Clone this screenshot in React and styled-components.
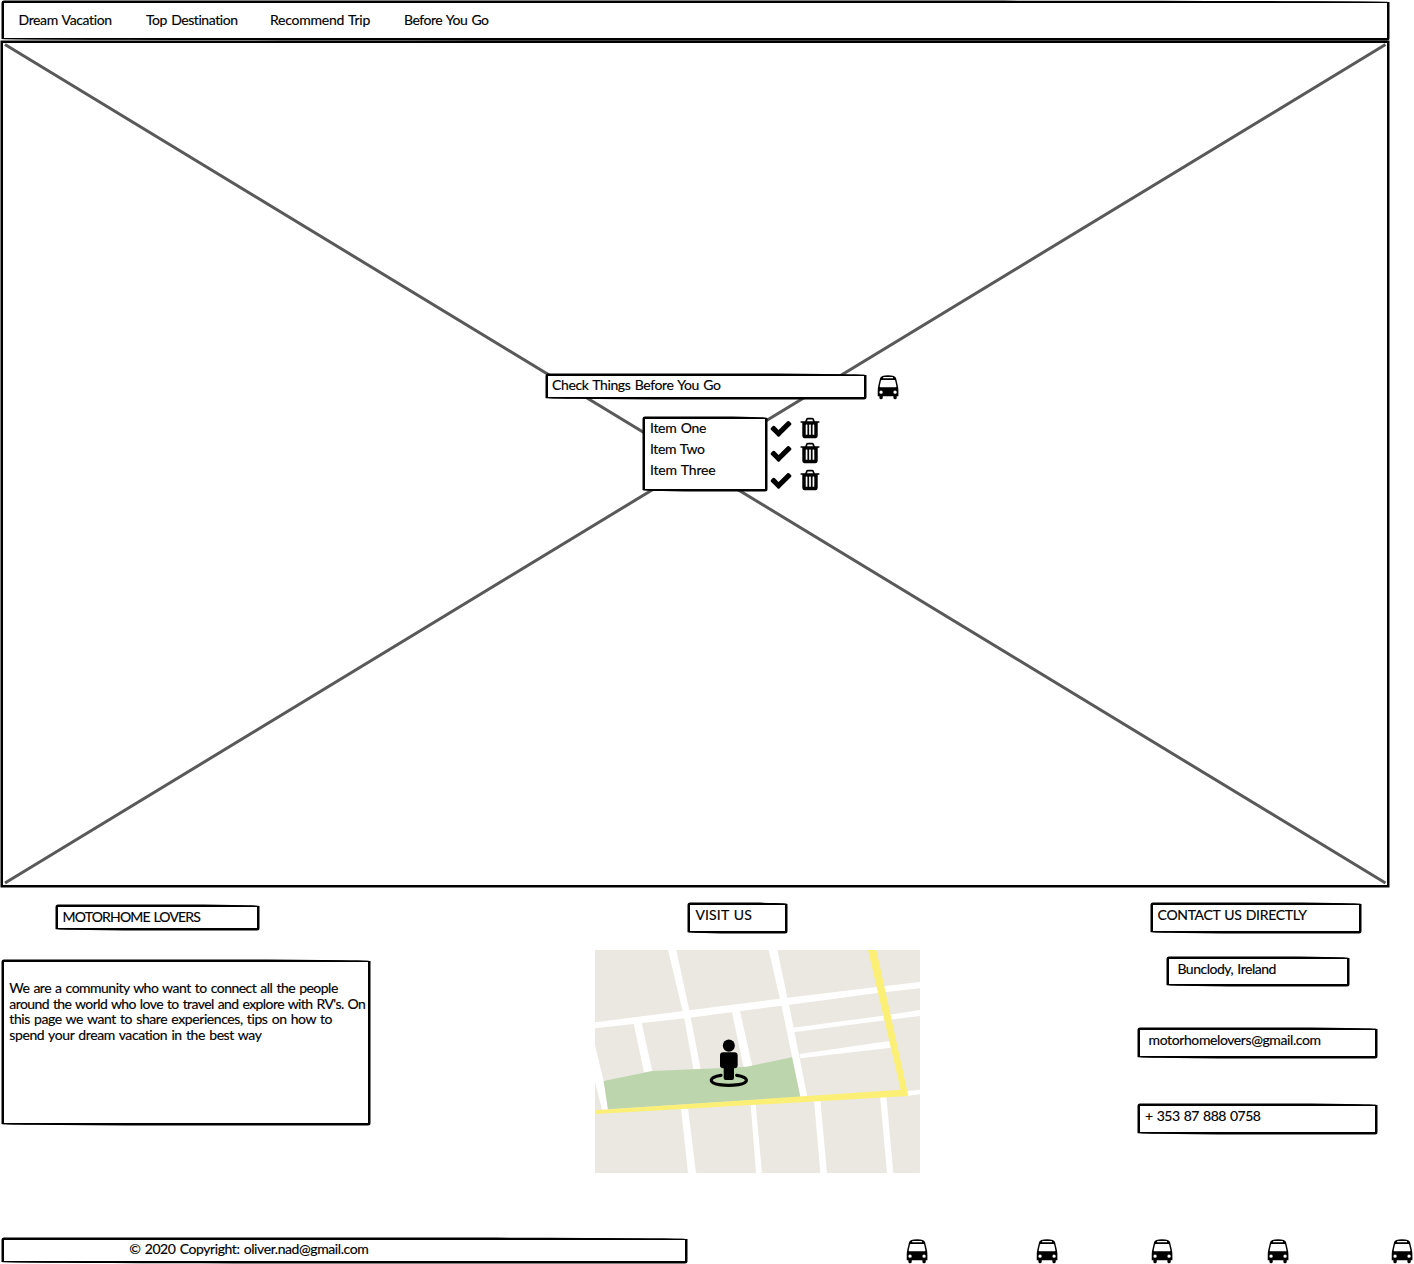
import React, { useLayoutEffect, useRef } from "react";
import styled, { createGlobalStyle, css } from "styled-components";

const GlobalStyle = createGlobalStyle`
  * { box-sizing: border-box; }
  body { margin: 0; background: #fff; overflow: hidden; }
`;

const Page = styled.div`
  width: 1414px;
  height: 1264px;
  overflow: hidden;
  display: flex;
  flex-direction: column;
  padding: 1px 0 1px 2px;
  background: #fff;
  color: #000;
  font: 14px/17px Lato, "Open Sans", sans-serif;
`;

const sketch = css`
  border: 2px solid #000;
  border-radius: 2px 45% 2px 55% / 2px 1px 2px 1px;
  box-shadow: 0 0 0 0.5px #000;
  background: #fff;
`;

const Nav = styled.nav`
  ${sketch}
  width: 1387px;
  height: 39px;
  padding: 8px 0 0 14.5px;
  display: flex;
  flex: none;
`;

const NavItem = styled.a`
  width: ${(p) => p.$slot}px;
`;

const Hero = styled.section`
  position: relative;
  width: 1388px;
  height: 846px;
  margin: 1px 0 0 -1px;
  border: 2px solid #000;
  box-shadow: 0 0 0 0.5px #000;
  flex: none;
  display: flex;
  flex-direction: column;
  padding-top: 331px;
`;

const Cross = styled.svg`
  position: absolute;
  left: 0;
  top: 0;
  width: 1384px;
  height: 842px;
`;

const SearchRow = styled.div`
  position: relative;
  display: flex;
  gap: 9.6px;
  margin-left: 543px;
`;

const ListRow = styled.div`
  position: relative;
  display: flex;
  gap: 2.4px;
  margin: 18px 0 0 640px;
`;

const Box = styled.div`
  ${sketch}
  width: ${(p) => p.$w}px;
  height: ${(p) => p.$h}px;
  padding: ${(p) => p.$pad || "2px 0 0 5px"};
  margin: ${(p) => p.$margin || 0};
  flex: none;
`;

const Items = styled(Box)`
  display: flex;
  flex-direction: column;
  gap: 4px;
`;

const Actions = styled.div`
  display: flex;
  flex-direction: column;
  margin-top: -1px;
`;

const ActionPair = styled.div`
  display: flex;
  gap: 4.3px;
  margin-bottom: ${(p) => p.$after}px;
`;

const Glyph = styled.svg`
  display: block;
  width: 24px;
  height: 24px;
  flex: none;
  fill: #000;
  overflow: visible;
  margin-top: ${(p) => p.$top || 0}px;
`;

const Info = styled.section`
  display: grid;
  grid-template-columns: 593px 542px 240px;
  height: 335px;
  margin-top: 16px;
  flex: none;
`;

const Column = styled.div`
  display: flex;
  flex-direction: column;
`;

const Paragraph = styled.div`
  line-height: 15.7px;
`;

const MapArt = styled.svg`
  display: block;
  width: 325px;
  height: 223px;
  margin-top: 17px;
`;

const Footer = styled.footer`
  display: flex;
  flex: none;
`;

const BusRow = styled.div`
  display: flex;
  margin-left: 217.6px;
  padding-top: 1px;
`;

const BusSlot = styled.div`
  width: ${(p) => p.$slot}px;
  flex: none;
`;

const Line = styled.span`
  display: block;
  width: max-content;
  white-space: pre;
  word-spacing: 1px;
  -webkit-text-stroke: 0.15px #000;
`;

/* A line of lettering, tracked so that it fills the given width. */
function Lettering({ width, children }) {
  const ref = useRef(null);
  useLayoutEffect(() => {
    const el = ref.current;
    const fit = () => {
      el.style.letterSpacing = "0px";
      const natural = el.getBoundingClientRect().width;
      el.style.letterSpacing = `${(width - natural) / children.length}px`;
    };
    fit();
    document.fonts.ready.then(fit);
  }, [width, children]);
  return <Line ref={ref}>{children}</Line>;
}

const Bus = ({ top }) => (
  <Glyph viewBox="16.8 15 72 72" $top={top}>
    <path
      fillRule="evenodd"
      d="M29 25Q31 15.5 53 15.5 75 15.5 77 25L82 46Q84 54 84 62V79H79V83Q79 88 74 88 69 88 69 83V79H37V83Q37 88 32 88 27 88 27 83V79H22V62Q22 54 24 46ZM40 21Q38 21 38 23 38 25 40 25H66Q68 25 68 23 68 21 66 21ZM34 30Q32 30 31.5 32L28 49Q27.500 52 30 52H76Q78.500 52 78 49L74.500 32Q74 30 72 30ZM32 61.500A5 5 0 1 0 32 71.500 5 5 0 1 0 32 61.500ZM74 61.500A5 5 0 1 0 74 71.500 5 5 0 1 0 74 61.500Z"
    />
  </Glyph>
);

const Check = () => (
  <Glyph viewBox="0 -30 1792 1792">
    <path d="M1671 566q0 40-28 68l-724 724-136 136q-28 28-68 28t-68-28l-136-136-362-362q-28-28-28-68t28-68l136-136q28-28 68-28t68 28l294 295 656-657q28-28 68-28t68 28l136 136q28 28 28 68z" />
  </Glyph>
);

const Trash = () => (
  <Glyph viewBox="0 0 1792 1792">
    <path d="M704 1376v-704q0-14-9-23t-23-9h-64q-14 0-23 9t-9 23v704q0 14 9 23t23 9h64q14 0 23-9t9-23zm256 0v-704q0-14-9-23t-23-9h-64q-14 0-23 9t-9 23v704q0 14 9 23t23 9h64q14 0 23-9t9-23zm256 0v-704q0-14-9-23t-23-9h-64q-14 0-23 9t-9 23v704q0 14 9 23t23 9h64q14 0 23-9t9-23zm-544-992h448l-48-117q-7-9-17-11h-317q-10 2-17 11zm928 32v64q0 14-9 23t-23 9h-96v948q0 83-47 143.5t-113 60.5h-832q-66 0-113-58.5t-47-141.5v-952h-96q-14 0-23-9t-9-23v-64q0-14 9-23t23-9h309l70-167q15-37 54-63t79-26h320q40 0 79 26t54 63l70 167h309q14 0 23 9t9 23z" />
  </Glyph>
);

const StreetMap = () => (
  <MapArt viewBox="15 165 975 669" preserveAspectRatio="none">
    <rect x="15" y="165" width="975" height="669" fill="#ebe8e1" />
    <g fill="#fff">
      <path d="M15 382 280 348 568 311 860 276 990 261V280L862 294 600 329 285 370 15 400Z" />
      <path d="M234 165H259L298 347 332 521 310 522 283 370Z" />
      <path d="M536 165H562L592 308 597 329 652 605H631L574 330Z" />
      <path d="M131 386 155 383 187 529 162 532Z" />
      <path d="M425 348 449 344 487 514 461 517Z" />
      <path d="M15 450 41 558 54 644H36L15 560Z" />
      <path d="M608 398 880 362 990 345V363L886 376 611 412Z" />
      <path d="M628 477 898 438 903 458 631 490Z" />
      <path d="M273 640H294L318 834H294Z" />
      <path d="M482 628H497L516 834H498Z" />
      <path d="M672 616H691L711 834H691Z" />
      <path d="M870 604H889L910 834H891Z" />
      <path d="M950 588 990 584V598L950 603Z" />
    </g>
    <path fill="#bcd5ad" d="M41 558 187 528 400 519 470 515 606 487 631 606 54 643Z" />
    <path fill="#fbef76" d="M15 646 932 584 834 165H859L955 603 15 657Z" />
    <ellipse cx="416.500" cy="452" rx="18" ry="18.5" />
    <path d="M400 472H433Q443 472 443 482V511Q443 520 434 520H432V549Q432 555 426 555H407Q401 555 401 549V520H399Q390 520 390 511V482Q390 472 400 472Z" />
    <path d="M393 541C356 546 354 564 387 569Q416 573 446 569C479 564 477 546 440 541" fill="none" stroke="#000" strokeWidth="9.5" strokeLinecap="round" />
  </MapArt>
);

const links = [
  ["Dream Vacation", 93.5, 127.5],
  ["Top Destination", 92, 124],
  ["Recommend Trip", 100, 134],
  ["Before You Go", 84.5, 90],
];

const story = [
  ["We are a community who want to connect all the people", 328.5],
  ["around the world who love to travel and explore with RV's. On", 356],
  ["this page we want to share experiences, tips on how to", 323],
  ["spend your dream vacation in the best way", 252.5],
];

const busSlots = [130, 115, 116, 124, 24];

const rowGaps = [1, 3, 0];

export default function App() {
  return (
    <Page>
      <GlobalStyle />
      <Nav>
        {links.map(([label, width, slot]) => (
          <NavItem key={label} $slot={slot}>
            <Lettering width={width}>{label}</Lettering>
          </NavItem>
        ))}
      </Nav>

      <Hero>
        <Cross viewBox="0 0 1384 842">
          <path d="M2 1.5 1382.5 840M1382.5 1.5 2 840" stroke="#595959" strokeWidth="3" />
        </Cross>
        <SearchRow>
          <Box $w={320} $h={25} $pad="0 0 0 4px">
            <Lettering width={168.5}>Check Things Before You Go</Lettering>
          </Box>
          <Bus top={1} />
        </SearchRow>
        <ListRow>
          <Items $w={124} $h={74} $pad="0 0 0 5px">
            <Lettering width={56}>Item One</Lettering>
            <Lettering width={54.5}>Item Two</Lettering>
            <Lettering width={65.5}>Item Three</Lettering>
          </Items>
          <Actions>
            {rowGaps.map((gap, i) => (
              <ActionPair key={i} $after={gap}>
                <Check />
                <Trash />
              </ActionPair>
            ))}
          </Actions>
        </ListRow>
      </Hero>

      <Info>
        <Column>
          <Box $w={203} $h={25} $pad="1px 0 0 4.6px" $margin="2px 0 0 54px">
            <Lettering width={137.5}>MOTORHOME LOVERS</Lettering>
          </Box>
          <Box $w={368} $h={165} $pad="18px 0 0 5.3px" $margin="30px 0 0">
            <Paragraph>
              {story.map(([line, width]) => (
                <Lettering key={line} width={width}>{line}</Lettering>
              ))}
            </Paragraph>
          </Box>
        </Column>
        <Column>
          <Box $w={99} $h={30} $margin="0 0 0 93px" $pad="1px 0 0 5.4px">
            <Lettering width={56.5}>VISIT US</Lettering>
          </Box>
          <StreetMap />
        </Column>
        <Column>
          <Box $w={210} $h={30} $margin="0 0 0 14px" $pad="1px 0 0 4.6px">
            <Lettering width={149}>CONTACT US DIRECTLY</Lettering>
          </Box>
          <Box $w={182} $h={29} $margin="24px 0 0 30px" $pad="1px 0 0 8.4px">
            <Lettering width={98.5}>Bunclody, Ireland</Lettering>
          </Box>
          <Box $w={239} $h={30} $margin="42px 0 0 1px" $pad="1px 0 0 8.6px">
            <Lettering width={172}>motorhomelovers@gmail.com</Lettering>
          </Box>
          <Box $w={239} $h={30} $margin="46px 0 0 1px" $pad="1px 0 0 5px">
            <Lettering width={115.5}>+ 353 87 888 0758</Lettering>
          </Box>
        </Column>
      </Info>

      <Footer>
        <Box $w={685} $h={25} $pad="0 0 0 125.3px">
          <Lettering width={239}>© 2020 Copyright: oliver.nad@gmail.com</Lettering>
        </Box>
        <BusRow>
          {busSlots.map((slot, i) => (
            <BusSlot key={i} $slot={slot}>
              <Bus />
            </BusSlot>
          ))}
        </BusRow>
      </Footer>
    </Page>
  );
}
